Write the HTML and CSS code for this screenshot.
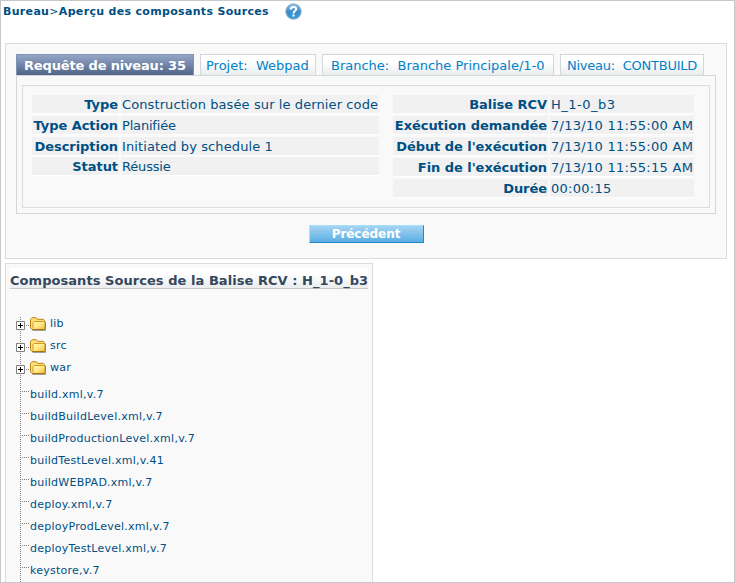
FILE: index.html
```
<!DOCTYPE html>
<html lang="fr">
<head>
<meta charset="utf-8">
<title>Aperçu des composants Sources</title>
<link rel="stylesheet" href="styles.css">
</head>
<body>
<svg class="defs" width="0" height="0" aria-hidden="true">
  <defs>
    <linearGradient id="gold" x1="0" y1="0" x2="1" y2="1"><stop offset="0" stop-color="#fffbb0"/><stop offset=".5" stop-color="#ffe988"/><stop offset="1" stop-color="#f2bd3c"/></linearGradient>
    <linearGradient id="help" x1="0" y1="0" x2="0" y2="1"><stop offset="0" stop-color="#8fc4ea"/><stop offset=".5" stop-color="#3d8ccb"/><stop offset="1" stop-color="#2f9de0"/></linearGradient>
    <symbol id="folder" viewBox="0 0 17 14">
      <path d="M2.5 13.5h13V5" fill="none" stroke="#a0a09a"/>
      <path d="M.5 10.8V2.5L2 .7h4L7.7 2.3h5.6L14.5 3.6v8.9H2z" fill="#ffdf78" stroke="#bd8215"/>
      <path d="M3 12V5.5L4.2 4.5H15v7.5z" fill="url(#gold)"/>
      <path d="M3 11.5V5.5L4 4.5h10.5" fill="none" stroke="#d39a27"/>
      <path d="M2 12.5h12.2l1-1V4.5" fill="none" stroke="#a8720f"/>
    </symbol>
    <symbol id="plus" viewBox="0 0 9 9">
      <path d="M.5 .5h8v8h-8z" fill="#fff" stroke="#808080"/>
      <path d="M2 4.5h5M4.5 2v5" stroke="#000"/>
    </symbol>
  </defs>
</svg>
<div class="page">
  <header class="crumbs">
    <span class="trail"><b>Bureau</b>&gt;<b>Aperçu des composants Sources</b></span>
    <svg class="help" width="17" height="17" viewBox="0 0 17 17"><circle cx="8.5" cy="8.5" r="7.7" fill="url(#help)" stroke="#8ca9c0"/><path d="M5.7 6.5C5.8 3.2 11.2 3.2 11.2 6.1 11.2 8 8.5 8 8.5 10.4" fill="none" stroke="#fff" stroke-width="2"/><path d="M7.4 11.5h2.2v2H7.4z" fill="#fff"/></svg>
  </header>
  <section class="panel">
    <nav class="tabs">
      <span class="tab active">Requête de niveau: 35</span>
      <span class="tab tab1">Projet:&nbsp; Webpad</span>
      <span class="tab tab2">Branche:&nbsp; Branche Principale/1-0</span>
      <span class="tab tab3">Niveau:&nbsp; CONTBUILD</span>
    </nav>
    <div class="sheet">
      <div class="details">
        <dl class="left">
          <dt>Type</dt><dd>Construction basée sur le dernier code</dd>
          <dt>Type Action</dt><dd class="tight">Planifiée</dd>
          <dt>Description</dt><dd>Initiated by schedule 1</dd>
          <dt>Statut</dt><dd class="tight">Réussie</dd>
        </dl>
        <dl class="right">
          <dt>Balise RCV</dt><dd class="tag">H_1-0_b3</dd>
          <dt>Exécution demandée</dt><dd>7/13/10 11:55:00 AM</dd>
          <dt>Début de l'exécution</dt><dd>7/13/10 11:55:00 AM</dd>
          <dt>Fin de l'exécution</dt><dd>7/13/10 11:55:15 AM</dd>
          <dt>Durée</dt><dd>00:00:15</dd>
        </dl>
      </div>
    </div>
    <button class="back" type="button">Précédent</button>
  </section>
  <section class="sources">
    <h2>Composants Sources de la Balise RCV : H_1-0_b3</h2>
    <div class="tree">
      <div class="dir"><svg class="plus"><use href="#plus"/></svg><i></i><svg class="folder"><use href="#folder"/></svg><span>lib</span></div>
      <div class="dir"><svg class="plus"><use href="#plus"/></svg><i></i><svg class="folder"><use href="#folder"/></svg><span>src</span></div>
      <div class="dir"><svg class="plus"><use href="#plus"/></svg><i></i><svg class="folder"><use href="#folder"/></svg><span>war</span></div>
      <div class="files">
        <div class="file"><i></i><span>build.xml,v.7</span></div>
        <div class="file"><i></i><span>buildBuildLevel.xml,v.7</span></div>
        <div class="file"><i></i><span>buildProductionLevel.xml,v.7</span></div>
        <div class="file"><i></i><span>buildTestLevel.xml,v.41</span></div>
        <div class="file"><i></i><span>buildWEBPAD.xml,v.7</span></div>
        <div class="file"><i></i><span>deploy.xml,v.7</span></div>
        <div class="file"><i></i><span>deployProdLevel.xml,v.7</span></div>
        <div class="file"><i></i><span>deployTestLevel.xml,v.7</span></div>
        <div class="file"><i></i><span>keystore,v.7</span></div>
      </div>
    </div>
  </section>
</div>
</body>
</html>
```
FILE: styles.css
```
* { box-sizing: border-box; }
body { margin: 0; background: #fff; color: #004f83; font: 13px "DejaVu Sans", Verdana, sans-serif; white-space: nowrap; overflow: hidden; }
.defs { display: block; }
.page { width: 735px; height: 583px; border: 1px solid #c8c8c8; padding: 0 7px 0 4px; overflow: hidden; }
.crumbs { display: flex; height: 42px; margin-left: -2px; font-size: 11px; line-height: 22px; }
.trail { width: 282px; letter-spacing: .32px; }
.help { margin-top: 2px; }
.panel { width: 722px; height: 216px; border: 1px solid #dcdcdc; background: #f9f9f9; padding: 10px; display: flex; flex-direction: column; }
.tabs { display: flex; gap: 6px; height: 21px; }
.tab { height: 21px; border: 1px solid #d2d8da; border-bottom: 0; background: linear-gradient(#fff 35%, #e9ecee); color: #0082c8; line-height: 22px; }
.active { width: 178px; padding-left: 7px; border-color: #7f92b6; background: linear-gradient(#94a6c6, #506489); color: #fff; font-weight: bold; letter-spacing: -.16px; }
.tab1 { width: 116px; padding-left: 5px; }
.tab2 { width: 232px; padding-left: 8px; }
.tab3 { width: 144px; padding-left: 6px; letter-spacing: -.24px; }
.sheet { width: 700px; height: 139px; border: 1px solid #d2d8da; padding: 9px 5px 5px; }
.details { height: 123px; border: 1px solid #dcdcdc; padding: 9px; display: flex; gap: 14px; }
dl { margin: 0; display: grid; grid-auto-rows: 18px; row-gap: 3px; column-gap: 2px; align-content: start; line-height: 20px; }
.left { grid-template-columns: 87px 258px; }
.right { grid-template-columns: 155px 144px; }
dt, dd { margin: 0; background: #f1f1f1; box-shadow: 0 1px #fff; }
dt { font-weight: bold; text-align: right; padding-right: 1px; letter-spacing: -.05px; }
dd { padding-left: 1px; }
.left dd { letter-spacing: .1px; }
.left .tight { letter-spacing: -.18px; }
.right dd { letter-spacing: .28px; }
.right .tag { letter-spacing: .5px; }
.left dt:nth-of-type(4), .left dd:nth-of-type(4) { margin: -1px 0 1px; }
.back { align-self: center; margin-top: 11px; width: 115px; height: 18px; padding: 0; border: 1px solid; border-color: #a9e2f6 #2489cb #2489cb #a9e2f6; background: linear-gradient(#a5d4f2, #5aaee3); color: #fff; font: bold 12px/17px "DejaVu Sans", Verdana, sans-serif; letter-spacing: -.05px; }
.sources { width: 368px; height: 340px; margin-top: 4px; border: 1px solid #dcdcdc; background: #f9f9f9; padding: 4px; }
h2 { margin: 0; width: 358px; height: 21px; border-bottom: 1px solid #c8c8c8; background: linear-gradient(#fff 30%, #ebecee); color: #34475c; font-size: 13px; line-height: 25px; letter-spacing: .05px; }
.tree { width: 340px; height: 300px; margin: 28px 0 0 10px; font-size: 11px; letter-spacing: .25px; background: repeating-linear-gradient(#808080 0 1px, transparent 1px 2px) 0 0 / 1px 100% no-repeat; }
.dir { display: flex; height: 22px; margin-left: -4px; }
.plus { width: 9px; height: 9px; margin-top: 4px; }
.dir i { width: 5px; height: 1px; margin-top: 8px; background: repeating-linear-gradient(90deg, transparent 0 1px, #808080 1px 2px); }
.folder { width: 17px; height: 14px; }
.dir span { margin-left: 3px; line-height: 14px; }
.file { display: flex; height: 22px; line-height: 24px; }
.file i { width: 10px; height: 1px; margin-top: 8px; background: repeating-linear-gradient(90deg, #808080 0 1px, transparent 1px 2px); }
```
